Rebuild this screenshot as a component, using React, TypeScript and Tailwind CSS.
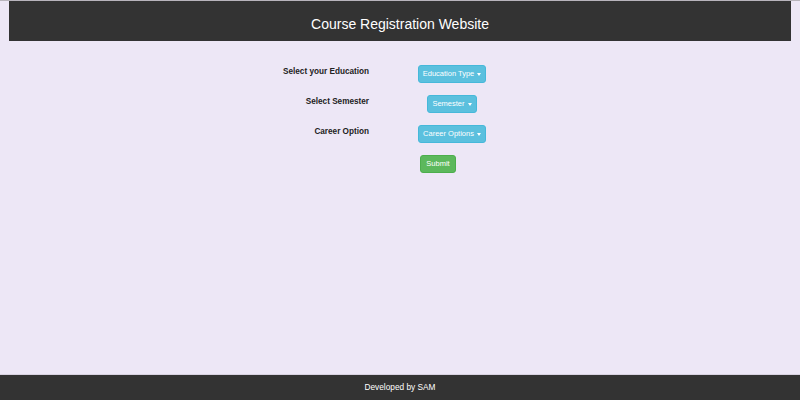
import React from 'react';

const Caret = () => (
  <span className="ml-[3px] inline-block h-0 w-0 border-x-[2.5px] border-t-[3px] border-x-transparent border-t-white align-middle" />
);

const DropButton: React.FC<{ label: string }> = ({ label }) => (
  <button
    type="button"
    className="h-[18px] rounded-[3px] border border-[#46b8da] bg-[#5bc0de] px-[4px] text-[7.5px] leading-none text-white"
  >
    {label}
    <Caret />
  </button>
);

const rows = [
  { label: 'Select your Education', button: 'Education Type' },
  { label: 'Select Semester', button: 'Semester' },
  { label: 'Career Option', button: 'Career Options' },
];

export default function App() {
  return (
    <div className="flex h-[400px] w-[800px] flex-col bg-[#ede7f6] font-['Liberation_Sans',Arial,sans-serif]">
      <div className="h-[1px] bg-[#b8b4bc]" />

      {/* header */}
      <header className="mx-[9px] flex h-[40px] items-center justify-center bg-[#333333] pt-[6px] text-[14px] text-white">
        Course Registration Website
      </header>

      {/* form */}
      <div className="mt-[24px] grid grid-cols-[369px_166px] gap-y-[12px]">
        {rows.map((r) => (
          <React.Fragment key={r.label}>
            <div className="pt-[1px] text-right text-[8.2px] font-bold leading-[12px] text-[#222]">
              {r.label}
            </div>
            <div className="flex justify-center">
              <DropButton label={r.button} />
            </div>
          </React.Fragment>
        ))}
        <div />
        <div className="flex pl-[51px]">
          <button
            type="button"
            className="h-[18px] w-[36px] rounded-[3px] border border-[#4cae4c] bg-[#5cb85c] text-[7.5px] leading-none text-white"
          >
            Submit
          </button>
        </div>
      </div>

      {/* footer */}
      <footer className="mt-auto flex h-[26px] items-center justify-center border-t border-[#d8d2e0] bg-[#333333] text-[8.3px] text-white">
        Developed by SAM
      </footer>
    </div>
  );
}
